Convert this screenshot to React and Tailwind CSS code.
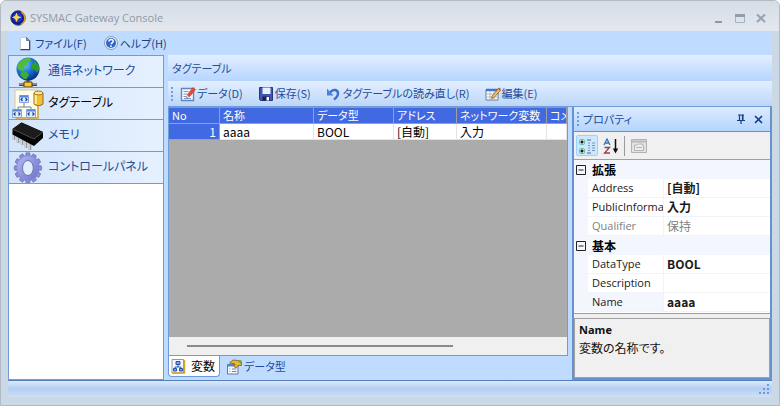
import React from "react";

const JP = "font-['Noto_Sans_CJK_JP',sans-serif] [font-feature-settings:'palt']";
const LATIN = "font-['Open_Sans','Noto_Sans_CJK_JP',sans-serif]";

function LogoIcon() {
  return (
    <svg className="h-4 w-4 shrink-0" viewBox="0 0 16 16" aria-hidden="true">
      <circle cx="8" cy="8" r="7.2" fill="#0c1c8c" stroke="#3b3b66" />
      <path d="M11 2a7 7 0 0 1 0 12.400" fill="none" stroke="#d99a2b" strokeWidth="1.500" />
      <circle cx="7.500" cy="7.500" r="4.800" fill="#1a3bd0" />
      <path d="M6.500 2.500 8 6l3.500 1.300L8 8.700l-1.500 3.500L5 8.700 1.800 7.300 5 6z" fill="#ffd84a" />
    </svg>
  );
}

function PageIcon() {
  return (
    <svg className="h-4 w-4 shrink-0" viewBox="0 0 16 16" aria-hidden="true">
      <path d="M2.500 2.500h6l3 3v9h-9z" fill="#fff" stroke="#c3ccd8" />
      <path d="M11.700 5.500v9.200H2.500" fill="none" stroke="#31435f" strokeWidth="1.200" />
      <path d="M8.500 2.500v3h3z" fill="#8da1bb" stroke="#42546e" strokeWidth=".7" />
    </svg>
  );
}

function HelpIcon() {
  return (
    <svg className="h-4 w-4 shrink-0" viewBox="0 0 16 16" aria-hidden="true">
      <circle cx="8" cy="8" r="6.500" fill="#e9eef5" stroke="#8a9bb5" />
      <circle cx="8" cy="8" r="5" fill="#2f67c9" />
      <path d="M6 6.500c0-2.700 4.200-2.600 4.200-.2 0 1.500-2 1.600-2.100 3" fill="none" stroke="#fff" strokeWidth="1.500" />
      <circle cx="8" cy="11.200" r=".9" fill="#fff" />
    </svg>
  );
}

function GlobeIcon() {
  return (
    <svg className="h-8 w-8 shrink-0" viewBox="0 0 32 32" aria-hidden="true">
      <defs>
        <radialGradient id="sea" cx=".35" cy=".3" r=".75">
          <stop offset="0" stopColor="#78c8ff" />
          <stop offset=".5" stopColor="#1a73dc" />
          <stop offset="1" stopColor="#062a7c" />
        </radialGradient>
      </defs>
      <path d="M16 22v5" stroke="#555" strokeWidth="3" />
      <path d="M7 28.500h18" stroke="#444" strokeWidth="3" />
      <path d="M7 28h18" stroke="#cfcfcf" strokeWidth="1" />
      <path d="M12 26h8v5h-8z" fill="#f2c83c" stroke="#5b4200" />
      <circle cx="16" cy="13" r="11.500" fill="url(#sea)" />
      <path d="M7 6.500c3-4 8-5 11-4.500l1 3-4 1 1 3-4 2-1 4-4-1-2-3z" fill="#4fbc3c" />
      <path d="M21 4c4 2 6 5 6.300 9l-2 4-2.300-3-3-1-1-4 3-2z" fill="#2f9b2a" />
      <path d="M10 15l5 1 2 3-3 4.500c-3-.5-5-3-6-5z" fill="#3fae35" />
    </svg>
  );
}

function TagTableIcon() {
  return (
    <svg className="h-8 w-8 shrink-0" viewBox="0 0 32 32" aria-hidden="true">
      <path d="M3 2h23v28H3z" fill="#fffdf0" stroke="#dac99a" />
      <path d="M26 4v26H4" fill="none" stroke="#c8a64a" strokeWidth="1.500" />
      <path d="M12 14v5M6 24v-5h13v5" fill="none" stroke="#718096" />
      <g fill="#dcecff" stroke="#86a6dc">
        <path d="M7.500 7.500h9v7h-9zM.5 21.500h9v8h-9zM14.500 21.500h9v8h-9z" />
      </g>
      <path d="M1 22.500h8M15 22.500h8M8 8.500h8" stroke="#5686df" strokeWidth="1.800" />
      <path d="m10.500 10-1.500 1.500 1.500 1.500m3-3 1.500 1.500-1.500 1.500m-10 11.500L2 26l1.500 1.500m3-3L8 26l-1.500 1.500m11-3L16 26l1.500 1.500m3-3L22 26l-1.500 1.500" fill="none" stroke="#163b95" strokeWidth="1.200" />
      <path d="M22 5v11c2 2 7 2 9 0V5z" fill="#f2bf3b" stroke="#9a6a0c" />
      <path d="M23.700 6.500v9.500" stroke="#fff0a8" strokeWidth="2" />
      <ellipse cx="26.500" cy="5" rx="4.500" ry="1.900" fill="#ffe797" stroke="#a67718" />
    </svg>
  );
}

function ChipIcon() {
  return (
    <svg className="h-8 w-8 shrink-0" viewBox="0 0 32 32" aria-hidden="true">
      <path d="M2 12v8m4-6v9m4-7v9m4-7v10m4-8v10" stroke="#777" strokeWidth="2.400" fill="none" />
      <path d="M1.700 12v8m4-6v9m4-7v9m4-7v10m4-8v10" stroke="#d5d5d5" strokeWidth="1.300" fill="none" />
      <path d="m.5 9 9-6.500L31 12v6l-9 8L.5 14.500z" fill="#050505" />
      <path d="m.5 9 9-6.500L31 12l-9 7z" fill="#1c1c1c" />
      <path d="m1 9.300 21 9.700 9-7" fill="none" stroke="#5c5c5c" strokeWidth=".8" />
    </svg>
  );
}

function GearIcon() {
  const teeth = Array.from({ length: 12 }, (_, i) => i * 30);
  return (
    <svg className="h-8 w-8 shrink-0" viewBox="0 0 32 32" aria-hidden="true">
      <defs>
        <linearGradient id="gear" x1="0" y1="0" x2="1" y2="1">
          <stop offset="0" stopColor="#a9aff0" />
          <stop offset="1" stopColor="#757ccf" />
        </linearGradient>
      </defs>
      <g transform="translate(1.500 0) scale(.9 1)">
        <g fill="#868ddb" stroke="#666c9f" strokeWidth=".6">
          {teeth.map((a) => (
            <path key={a} d="M13 5 14 .8h4L19 5z" transform={`rotate(${a} 16 16)`} />
          ))}
        </g>
        <circle cx="16" cy="16" r="9" fill="none" stroke="url(#gear)" strokeWidth="6" />
        <ellipse cx="16" cy="16" rx="6" ry="7.500" fill="#e0edff" stroke="#686e9e" />
      </g>
    </svg>
  );
}

function DataIcon() {
  return (
    <svg className="h-4 w-4 shrink-0" viewBox="0 0 16 16" aria-hidden="true">
      <path d="M1.500 2.500h12v12h-12z" fill="#f5faff" stroke="#6685b6" strokeWidth="1.400" />
      <path d="M3.500 5.500h5M3.500 8h4M3.500 10.500h3M4 12.500h7" stroke="#7498d2" />
      <path d="m6.500 11.500 1-3L13 1.500l2.500 2-5.700 7z" fill="#e2492f" stroke="#b5341f" strokeWidth=".5" />
      <path d="m6.500 11.500.8-2.500 1.700 1.400z" fill="#f5d9a8" />
    </svg>
  );
}

function SaveIcon() {
  return (
    <svg className="h-4 w-4 shrink-0" viewBox="0 0 16 16" aria-hidden="true">
      <path d="M1.500 1.500h13v13h-12l-1-1z" fill="#4254b0" stroke="#27357f" />
      <path d="M4.500 1.500h8V8h-8z" fill="#e8effb" />
      <path d="M4.500 10.500h7v4h-7z" fill="#18204f" />
      <path d="M8.500 11h2.500v3.500H8.500z" fill="#fff" />
    </svg>
  );
}

function UndoIcon() {
  return (
    <svg className="h-4 w-4 shrink-0" viewBox="0 0 16 16" aria-hidden="true">
      <path d="M4 6.500c3-4 8-3 8 1 0 2.500-1.500 4-4 6" fill="none" stroke="#3c6fd0" strokeWidth="2.400" />
      <path d="M1 2.500v7h6.500z" fill="#4b80dc" />
    </svg>
  );
}

function EditIcon() {
  return (
    <svg className="h-4 w-4 shrink-0" viewBox="0 0 16 16" aria-hidden="true">
      <path d="M1 3.500h12v10.500H1z" fill="#fff" stroke="#6c7a90" />
      <path d="M1 4h12" stroke="#4675c8" strokeWidth="2.500" />
      <path d="M1.500 8h11M1.500 11h11M5 5v9M9 5v9" stroke="#aab8cc" />
      <path d="m7 10 6.500-7.500 2 1.700L9 11.700l-2.500.8z" fill="#f2c15a" stroke="#784f1f" strokeWidth=".7" />
      <path d="m13 3 1-1.500 2 1.600-1 1.500z" fill="#cc553d" />
    </svg>
  );
}

function VariableTabIcon() {
  return (
    <svg className="h-4 w-4 shrink-0" viewBox="0 0 16 16" aria-hidden="true">
      <path d="M1 1.500h11.500v13.500H1z" fill="#f3f8ff" stroke="#9098a5" />
      <path d="M1 15h12.500V2" fill="none" stroke="#d0a728" strokeWidth="1.500" />
      <path d="M7 6v3M4 11V9h6v2" fill="none" stroke="#2b56b0" />
      <path d="M5 3.500h4v3H5zM2.500 10.500h3v2.500h-3zM8.500 10.500h3v2.500h-3z" fill="#75a5f0" stroke="#244fab" />
    </svg>
  );
}

function TypeTabIcon() {
  return (
    <svg className="h-4 w-4 shrink-0" viewBox="0 0 16 16" aria-hidden="true">
      <path d="M1.500 5.500H12v9.500H1.500z" fill="#f8fbff" stroke="#60779b" />
      <path d="M1.500 6.500H12" stroke="#5d86c7" strokeWidth="2" />
      <path d="M3.500 10h1M6 10h4.500M3.500 12.500h1M6 12.500h4.500" stroke="#6d83a5" />
      <path d="M3.500 4 7 1l5 .5 3.500 2v3L12 6.500 10 9 8 7.500 9 5z" fill="#e9b533" stroke="#7d5a16" strokeWidth=".8" />
      <path d="M11 1.300h4.500v4" fill="#6b9b45" />
    </svg>
  );
}

function CategoryIcon() {
  return (
    <svg className="h-4 w-4" viewBox="0 0 16 16" aria-hidden="true">
      <rect x=".5" y="1.500" width="5" height="5" rx="1.500" fill="#e8fff5" stroke="#72bba4" />
      <rect x=".5" y="10.500" width="5" height="5" rx="1.500" fill="#e8fff5" stroke="#72bba4" />
      <path d="M1.500 4h3M3 2.500v3M1.500 13h3M3 11.500v3" stroke="#111" strokeWidth="1.600" />
      <path d="M8 2h4M8 15h4" stroke="#52657d" />
      <path d="M9 5h2M13 5h3M9 7.500h2M13 7.500h3M9 10h2M13 10h3M9 12.500h2M13 12.500h3" stroke="#7892b4" />
    </svg>
  );
}

function PropertyPagesIcon() {
  return (
    <svg className="h-4 w-4" viewBox="0 0 16 16" aria-hidden="true">
      <path d="M.5 1.500h15v13H.5z" fill="#e2e2e2" stroke="#b2b2b2" />
      <path d="M1 3.500h14" stroke="#b8b8b8" strokeWidth="2" />
      <path d="M3.500 12.500V7h3l1-1h4v1.500h1v5z" fill="#eee" stroke="#b5b5b5" />
      <path d="M5 9.500h6" stroke="#b5b5b5" />
    </svg>
  );
}

function SortIcon() {
  return (
    <svg className="h-4 w-4" viewBox="0 0 16 16" aria-hidden="true">
      <path d="m1 7 3-6 3 6M2.200 5h3.600" fill="none" stroke="#3971b8" strokeWidth="1.300" />
      <path d="M1.500 9.500h5l-5 5.500h5.500" fill="none" stroke="#984050" strokeWidth="1.300" />
      <path d="M12.500 1v11" stroke="#111" strokeWidth="1.500" />
      <path d="M9.800 10.500h5.400l-2.700 5z" fill="#111" />
    </svg>
  );
}

function Grip() {
  return (
    <span className="flex shrink-0 flex-col gap-[2px]" aria-hidden="true">
      {[0, 1, 2, 3].map((n) => (
        <i key={n} className="block h-[2px] w-[2px] bg-[#6f9de0]" />
      ))}
    </span>
  );
}

const sections = [
  { name: "通信ネットワーク", icon: GlobeIcon },
  { name: "タグテーブル", icon: TagTableIcon, active: true },
  { name: "メモリ", icon: ChipIcon },
  { name: "コントロールパネル", icon: GearIcon },
];

const tools = [
  { name: "データ(D)", icon: DataIcon },
  { name: "保存(S)", icon: SaveIcon },
  { name: "タグテーブルの読み直し(R)", icon: UndoIcon },
  { name: "編集(E)", icon: EditIcon },
];

const groups = [
  {
    name: "拡張",
    rows: [
      { name: "Address", value: "[自動]" },
      { name: "PublicInforma", value: "入力" },
      { name: "Qualifier", value: "保持", dim: true },
    ],
  },
  {
    name: "基本",
    rows: [
      { name: "DataType", value: "BOOL" },
      { name: "Description", value: "" },
      { name: "Name", value: "aaaa", selected: true },
    ],
  },
];

function TitleBar() {
  return (
    <header className="flex h-[30px] shrink-0 items-center bg-gradient-to-b from-[#d6dde6] to-[#e3e8ee] pt-1 pr-[10px] pl-[9px]">
      <LogoIcon />
      <h1 className={`ml-1 flex-1 text-[11px] text-[#8f9aa8] ${LATIN}`}>SYSMAC Gateway Console</h1>
      <div className="flex gap-[5px]">
        <button aria-label="最小化" className="h-4 w-4">
          <svg viewBox="0 0 16 16" aria-hidden="true"><path d="M4 12h7" stroke="#8e98a5" strokeWidth="2" /></svg>
        </button>
        <button aria-label="最大化" className="h-4 w-4">
          <svg viewBox="0 0 16 16" aria-hidden="true"><path d="M3.500 5v7.500h9V5" fill="none" stroke="#a5b2c2" /><path d="M3 5.500h10" stroke="#929dab" strokeWidth="3" /></svg>
        </button>
        <button aria-label="閉じる" className="h-4 w-4">
          <svg viewBox="0 0 16 16" aria-hidden="true"><path d="m4 4.500 8 7.500M12 4.500 4 12" stroke="#98a4b4" strokeWidth="2.200" /></svg>
        </button>
      </div>
    </header>
  );
}

function Sidebar() {
  return (
    <nav className="w-[156px] shrink-0 border border-[#6f9bd8] bg-white">
      {sections.map(({ name, icon: Icon, active }) => (
        <button
          key={name}
          className={`flex h-8 w-full items-center gap-1 overflow-hidden border-b border-[#6f9bd8] bg-gradient-to-r from-[#d3e4fb] to-[#e6f1ff] pl-[3px] text-xs ${active ? "text-black" : "text-[#244c99]"}`}
        >
          <Icon />
          <span className="pb-1">{name}</span>
        </button>
      ))}
    </nav>
  );
}

function Grid() {
  const head = "h-4 overflow-hidden border-r border-b border-[#a0a0a0] bg-[#4169e1] pl-[3px] text-left text-[11px] font-normal text-white";
  const cell = "h-4 border-r border-b border-[#e4e4e4] bg-white pl-[3px]";
  return (
    <div className="flex min-h-0 flex-1 flex-col border border-[#6f9bd8] bg-[#ababab]">
      <div className="min-h-0 flex-1 overflow-hidden">
        <table className="w-full table-fixed border-separate border-spacing-0 text-xs leading-[15px] whitespace-nowrap">
          <colgroup>
            <col className="w-[51px]" />
            <col />
            <col className="w-[80px]" />
            <col className="w-[63px]" />
            <col className="w-[90px]" />
            <col className="w-[20px]" />
          </colgroup>
          <thead>
            <tr>
              <th className={head}>No</th>
              <th className={head}>名称</th>
              <th className={head}>データ型</th>
              <th className={head}>アドレス</th>
              <th className={head}>ネットワーク変数</th>
              <th className={head}>コメ</th>
            </tr>
          </thead>
          <tbody>
            <tr>
              <th className="h-4 border-r border-b border-[#a0a0a0] bg-[#4169e1] px-[3px] text-right font-normal text-white">1</th>
              <td className={cell}>aaaa</td>
              <td className={cell}>BOOL</td>
              <td className={cell}>[自動]</td>
              <td className={cell}>入力</td>
              <td className={cell} />
            </tr>
          </tbody>
        </table>
      </div>
      <div className="flex h-[18px] shrink-0 items-center bg-[#f0f0f0] pl-[18px]">
        <div className="h-[2px] w-[70%] bg-[#8a8a8a]" />
      </div>
    </div>
  );
}

function PropertyPanel() {
  return (
    <aside className="flex w-[200px] shrink-0 flex-col border-2 border-t-0 border-[#6593cf]">
      <div className="flex h-6 shrink-0 items-center gap-1 bg-gradient-to-b from-[#dcebff] to-[#b5d4fd] pr-1 pl-[3px] text-[#244c99]">
        <Grip />
        <h2 className="flex-1 text-[11px]">プロパティ</h2>
        <button aria-label="自動的に隠す" className="h-[14px] w-[14px]">
          <svg viewBox="0 0 14 14" aria-hidden="true"><path d="M4 3h6M5.500 3v5M8.500 3v5M3 8.500h8M7 8.500V12" fill="none" stroke="#153d80" strokeWidth="1.200" /><path d="M8 3h1.500v5H8z" fill="#153d80" /></svg>
        </button>
        <button aria-label="パネルを閉じる" className="h-[14px] w-[14px]">
          <svg viewBox="0 0 14 14" aria-hidden="true"><path d="m3 4 7 7M10 4l-7 7" stroke="#153d80" strokeWidth="1.700" /></svg>
        </button>
      </div>
      <div className="flex h-[28px] shrink-0 items-center gap-[3px] border-t border-[#6593cf] bg-[#f0f0f0] pl-[2px]">
        <button aria-label="項目別" className="flex h-[21px] w-[22px] items-center justify-center rounded-xs border border-[#99d1ff] bg-[#cce8ff]">
          <CategoryIcon />
        </button>
        <button aria-label="アルファベット順" className="flex h-[21px] w-[20px] items-center justify-center">
          <SortIcon />
        </button>
        <span className="h-5 w-px bg-[#9a9a9a]" />
        <button aria-label="プロパティ ページ" disabled className="flex h-[21px] w-[22px] items-center justify-center">
          <PropertyPagesIcon />
        </button>
      </div>
      <div className="min-h-0 flex-1 overflow-hidden border-y border-[#a0a0a0] bg-white">
        <table className="w-full table-fixed border-separate border-spacing-0 text-xs leading-[18px] whitespace-nowrap">
          <colgroup>
            <col className="w-[14px]" />
            <col className="w-[76px]" />
            <col />
          </colgroup>
          {groups.map((group) => (
            <tbody key={group.name}>
              <tr>
                <th className="h-[19px] bg-[#f3f6fc]">
                  <button aria-label={`${group.name}を折りたたむ`} className="flex h-[18px] w-full items-center pl-[2px]">
                    <svg className="h-[10px] w-[10px]" viewBox="0 0 10 10" aria-hidden="true"><path d="M.5.5h9v9h-9zM2.500 5h5" fill="none" stroke="#222" /></svg>
                  </button>
                </th>
                <th colSpan={2} className="bg-[#f3f6fc] pl-1 text-left font-bold">{group.name}</th>
              </tr>
              {group.rows.map((row) => (
                <tr key={row.name} className={row.dim ? "text-[#808080]" : "text-[#1a1a1a]"}>
                  <td className="h-[19px] bg-[#f3f6fc]" />
                  <th className={`overflow-hidden border-r border-b border-[#f0f3fa] pl-1 text-left text-[11px] font-normal ${LATIN} ${row.selected ? "bg-[#f3f6fc]" : ""}`}>{row.name}</th>
                  <td className={`border-b border-[#f0f3fa] pl-[3px] ${row.dim ? "" : "font-bold"}`}>{row.value}</td>
                </tr>
              ))}
            </tbody>
          ))}
        </table>
      </div>
      <div className="h-1 shrink-0 bg-[#f0f0f0]" />
      <div className="h-[60px] shrink-0 border border-[#a0a0a0] bg-[#f0f0f0] px-1 pt-[2px] leading-[18px] text-[#111]">
        <p className={`text-[11px] font-bold ${LATIN}`}>Name</p>
        <p className="text-xs leading-[18px]">変数の名称です。</p>
      </div>
    </aside>
  );
}

export default function App() {
  return (
    <div className={`flex h-screen flex-col overflow-hidden rounded-t-md border border-[#b3bac3] bg-[#cbd8e6] ${JP}`}>
      <TitleBar />
      <div className="mx-[7px] mb-2 flex min-h-0 flex-1 flex-col bg-[#bfdbff]">
        <div className="flex h-6 shrink-0 items-center gap-4 pl-[10px] text-[11px] text-[#173f80]">
          <button className="flex items-center gap-px"><PageIcon />ファイル(F)</button>
          <button className="flex items-center gap-px"><HelpIcon />ヘルプ(H)</button>
        </div>
        <div className="flex min-h-0 flex-1 gap-1 border-b border-[#5680bb]">
          <Sidebar />
          <main className="flex min-w-0 flex-1 flex-col">
            <h2 className="flex h-[26px] shrink-0 items-center bg-gradient-to-b from-[#e3efff] to-[#b6d5ff] pl-1 text-[11px] text-[#244c99]">タグテーブル</h2>
            <div className="flex h-[26px] shrink-0 items-center border-b border-[#6f9bd8] bg-gradient-to-b from-[#e3efff] to-[#bcd6f9] pl-[3px] text-[11px] text-[#244c99]">
              <Grip />
              <div className="ml-[7px] flex gap-[15px]">
                {tools.map(({ name, icon: Icon }) => (
                  <button key={name} className="flex items-center gap-px"><Icon />{name}</button>
                ))}
              </div>
            </div>
            <div className="flex min-h-0 flex-1 gap-1">
              <section className="flex min-w-0 flex-1 flex-col">
                <Grid />
                <div role="tablist" className="flex h-6 shrink-0 items-start gap-[6px]">
                  <button role="tab" aria-selected="true" className="flex h-[21px] items-center gap-1 rounded-b border border-t-0 border-[#6f9bd8] bg-white pr-1 pl-[2px] text-xs text-black"><VariableTabIcon />変数</button>
                  <button role="tab" aria-selected="false" className="flex h-[21px] items-center gap-[2px] text-[11px] text-[#244c99]"><TypeTabIcon />データ型</button>
                </div>
              </section>
              <PropertyPanel />
            </div>
          </main>
        </div>
        <footer className="flex h-4 shrink-0 items-end justify-end bg-gradient-to-b from-[#dbe9fb] via-[#b3cff3] to-[#cfe0f6] p-[2px]">
          <svg className="h-[11px] w-[11px]" viewBox="0 0 11 11" aria-hidden="true"><path d="M8 0h2v2H8zM4 4h2v2H4zM8 4h2v2H8zM0 8h2v2H0zM4 8h2v2H4zM8 8h2v2H8z" fill="#6f9bdc" /></svg>
        </footer>
      </div>
    </div>
  );
}
